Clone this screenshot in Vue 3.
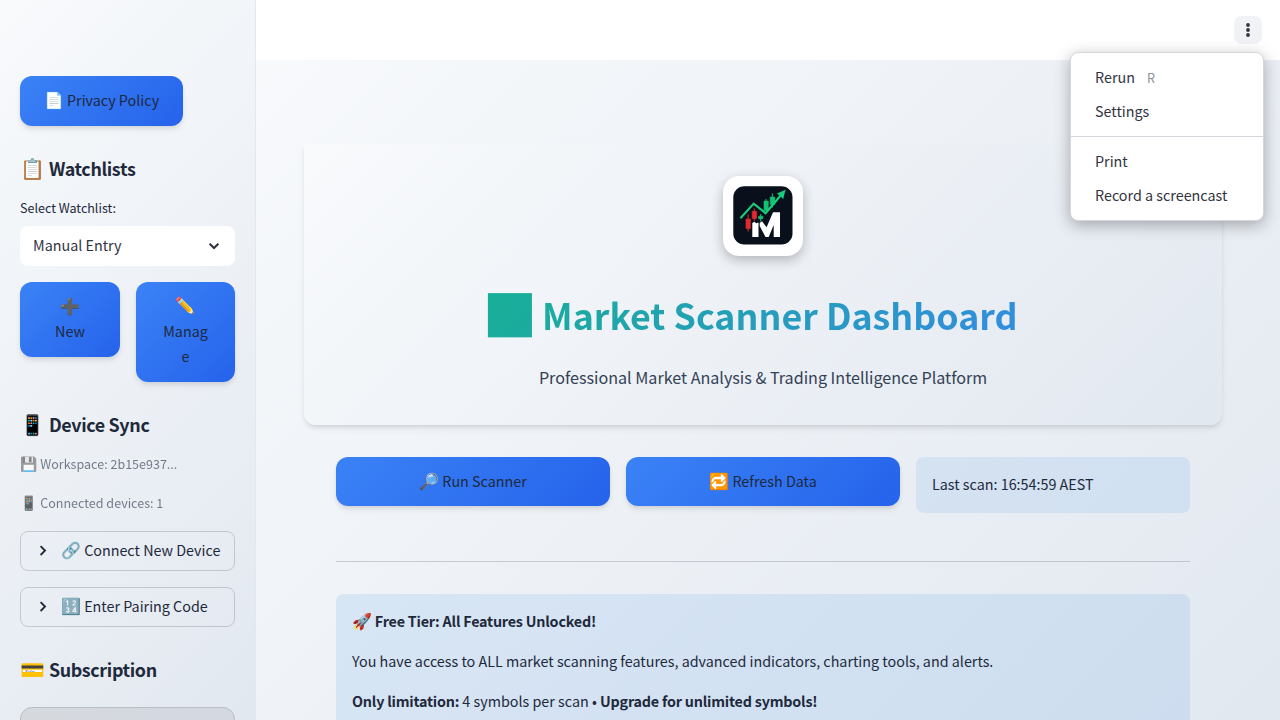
<script setup>
const menuGroups = [
  [{ label: 'Rerun', key: 'R' }, { label: 'Settings' }],
  [{ label: 'Print' }, { label: 'Record a screencast' }],
]
const expanders = [
  { icon: '🔗', label: 'Connect New Device' },
  { icon: '🔢', label: 'Enter Pairing Code' },
]
</script>

<template>
  <div class="app">
    <aside class="sidebar">
      <button class="btn policy"><span><i class="e">📄</i> Privacy Policy</span></button>
      <h3 class="watch"><i class="e">📋</i> Watchlists</h3>
      <label class="field">Select Watchlist:</label>
      <div class="select">
        <span>Manual Entry</span>
        <svg width="24" height="24" viewBox="0 0 24 24"><path d="M7.6 10.700l4.400 4.300 4.400-4.300" fill="none" stroke="#31333f" stroke-width="2.1" /></svg>
      </div>
      <div class="pair">
        <button class="btn tall"><i class="e">➕</i><br />New</button>
        <button class="btn tall"><i class="e">✏️</i><br />Manag<br />e</button>
      </div>
      <h3 class="sync"><i class="e">📱</i> Device Sync</h3>
      <p class="caption"><i class="e">💾</i> Workspace: 2b15e937...</p>
      <p class="caption second"><i class="e">📱</i> Connected devices: 1</p>
      <div v-for="x in expanders" :key="x.label" class="expander">
        <svg width="20" height="20" viewBox="0 0 20 20"><path d="M7.600 6.200l4.400 4.400-4.400 4.400" fill="none" stroke="#1e293b" stroke-width="1.9" /></svg>
        <span><i class="e">{{ x.icon }}</i> {{ x.label }}</span>
      </div>
      <h3 class="sub"><i class="e">💳</i> Subscription</h3>
      <div class="plan"></div>
    </aside>

    <div class="content">
      <header class="topbar">
        <button class="dots" aria-label="Menu">
          <svg width="20" height="20" viewBox="0 0 20 20" fill="#31333f"><circle cx="10" cy="5" r="1.9" /><circle cx="10" cy="10" r="1.9" /><circle cx="10" cy="15" r="1.9" /></svg>
        </button>
      </header>
      <main>
        <section class="hero">
          <div class="logo">
            <svg width="60" height="60" viewBox="0 0 60 60">
              <rect x=".3" y=".3" width="59.2" height="58.2" rx="11" fill="#09101c" />
              <g fill="#e32a2e" stroke="#e32a2e">
                <path d="M15.200 28.500v17M21.300 22.500v12.500" />
                <path d="M13 33h4.400v9.600H13zM19.200 25.300h4.400v7.200h-4.400z" stroke-width=".6" />
              </g>
              <g fill="#12c172" stroke="#12c172">
                <path d="M27.700 28v7.500M33 13v12M39.400 7.500v14" />
                <path d="M25.600 30.200h4.300v2.600h-4.300zM31 15h4.300v9.500H31zM37.200 11h4.600v7.600h-4.600z" stroke-width=".6" />
              </g>
              <path d="M7.400 32.300L20.700 17.600l11.900 9.600L48.500 8.500" fill="none" stroke="#17cf7c" stroke-width="2.100" />
              <path d="M52.600 3.800l-2.500 9.400-2.200-2.700-3.900-3z" fill="#17cf7c" />
              <path d="M19.300 51V37l2-1.200 2 1.400 2.200-.6V51zM26.700 37l2.300-1.800 4.600 6L40 26.300h7V51h-6.300V39l-5 12h-3.200l-5.800-11z" fill="#fff" />
            </svg>
          </div>
          <h1><i class="e">📈</i> Market Scanner Dashboard</h1>
          <p class="tagline">Professional Market Analysis &amp; Trading Intelligence Platform</p>
        </section>
        <div class="actions">
          <button class="btn"><span><i class="e">🔎</i> Run Scanner</span></button>
          <button class="btn"><span><i class="e">🔁</i> Refresh Data</span></button>
          <div class="info">Last scan: 16:54:59 AEST</div>
        </div>
        <hr />
        <section class="tier">
          <p><b><i class="e">🚀</i> Free Tier: All Features Unlocked!</b></p>
          <p>You have access to ALL market scanning features, advanced indicators, charting tools, and alerts.</p>
          <p><b>Only limitation:</b> 4 symbols per scan • <b>Upgrade for unlimited symbols!</b></p>
        </section>
      </main>
    </div>

    <nav class="menu">
      <ul v-for="(group, i) in menuGroups" :key="i">
        <li v-for="item in group" :key="item.label">{{ item.label }}<kbd v-if="item.key">{{ item.key }}</kbd></li>
      </ul>
    </nav>
  </div>
</template>

<style>
body { margin: 0; overflow: hidden; }
</style>

<style scoped>
* { box-sizing: border-box; }
.app {
  position: relative;
  display: flex;
  width: 1280px;
  height: 720px;
  overflow: hidden;
  font-family: "Noto Sans CJK JP", "Noto Sans", sans-serif;
  font-size: 14.33px;
  line-height: 24px;
  color: #1e293b;
}
.sidebar, .content, .hero { background: linear-gradient(135deg, #f8fafc 0%, #e2e8f0 100%); }
h1, h3, p, ul { margin: 0; padding: 0; }
.e { font-style: normal; font-size: 1.117em; line-height: 1; font-family: "Noto Color Emoji", sans-serif; }
.btn {
  display: flex;
  align-items: center;
  justify-content: center;
  padding: 0 0 2px;
  border: 0;
  border-radius: 12px;
  font: inherit;
  color: #1e293b;
  background: linear-gradient(135deg, #3b82f6 0%, #2563eb 100%);
  box-shadow: 0 4px 6px -1px rgba(0, 0, 0, .1), 0 2px 4px -1px rgba(0, 0, 0, .06);
}
.sidebar {
  width: 256px;
  height: 720px;
  flex: none;
  padding: 76px 20px 0;
  border-right: 1px solid #e2e8f0;
}
.policy { width: 163px; height: 50px; }
h3 { font-size: 17.9px; line-height: 24px; font-weight: 600; letter-spacing: -.36px; }
h3 .e { letter-spacing: 0; margin-right: .3px; }
.watch { margin-top: 30px; }
.field { display: block; margin-top: 18px; font-size: 12.54px; line-height: 20px; }
.select {
  display: flex;
  align-items: center;
  justify-content: space-between;
  height: 40px;
  margin-top: 8px;
  padding: 0 9px 2px 13px;
  border-radius: 8px;
  background: #fff;
  color: #31333f;
}
.pair { display: grid; grid-template-columns: 100px 99px; gap: 16px; align-items: start; margin-top: 16px; }
.tall { display: block; padding: 10px 0 13px; line-height: 25.4px; height: 75px; }
.tall:last-child { height: 100px; }
.sync { margin-top: 30px; }
.caption { margin-top: 18px; font-size: 12.54px; line-height: 20px; opacity: .6; }
.second { margin-top: 19px; margin-bottom: 18px; }
.expander {
  display: flex;
  align-items: center;
  height: 40px;
  margin-bottom: 16px;
  padding: 0 0 2px 12px;
  border: 1px solid rgba(49, 51, 63, .2);
  border-radius: 8px;
  white-space: nowrap;
}
.expander svg { margin-right: 8px; }
.sub { margin-top: 30px; }
.plan { height: 60px; margin-top: 26px; border: 1px solid #b9bdc5; border-radius: 12px; background: linear-gradient(135deg, #d6d9dd, #d2d7e2); }
.content { flex: 1; min-width: 0; }
.topbar { display: flex; justify-content: flex-end; height: 60px; padding: 16px 18px 0 0; background: #fff; }
.dots { display: grid; place-items: center; width: 28px; height: 28px; padding: 0; border: 0; border-radius: 8px; background: #f0f2f6; }
main { width: 854px; margin-left: 80px; padding-top: 84px; }
.hero {
  height: 281px;
  margin: 0 -32px;
  padding-top: 32px;
  text-align: center;
  border-radius: 0 0 12px 12px;
  box-shadow: 0 4px 6px -1px rgba(0, 0, 0, .1), 0 2px 4px -1px rgba(0, 0, 0, .06);
}
.logo { display: grid; place-items: center; width: 80px; height: 80px; margin: 0 auto; border-radius: 16px; background: #fff; box-shadow: 0 4px 12px rgba(0, 0, 0, .25); }
h1 {
  height: 64px;
  margin: 26px 32px 0;
  padding-right: 23px;
  font-size: 35.8px;
  line-height: 64px;
  font-weight: 700;
  color: transparent;
  background: linear-gradient(135deg, #10b981 0%, #3b82f6 100%);
  -webkit-background-clip: text;
  background-clip: text;
}
h1 .e { margin-right: -1.2px; vertical-align: 1px; }
.tagline { margin-top: 17px; font-size: 16.12px; line-height: 28px; color: #334155; }
.actions { display: grid; grid-template-columns: repeat(3, 274px); gap: 16px; align-items: start; }
.hero + .actions { margin-top: 32px; }
.actions .btn { height: 49px; }
.info { height: 56px; padding: 15px 16px; border-radius: 8px; background: rgba(28, 131, 225, .1); }
hr { height: 1px; margin: 48px 0 32px; border: 0; background: rgba(49, 51, 63, .2); }
.tier { height: 126px; padding: 15px 16px 0; border-radius: 8px 8px 0 0; background: rgba(28, 131, 225, .11); }
.tier p { margin-bottom: 16px; }
.tier b { letter-spacing: -.2px; }
.menu {
  position: absolute;
  top: 52px;
  left: 1070px;
  width: 194px;
  border: 1px solid #d5d7dc;
  border-radius: 8px;
  background: #fff;
  color: #31333f;
  box-shadow: 0 4px 16px rgba(0, 0, 0, .3);
}
.menu ul { padding: 7px 0 8px; list-style: none; }
.menu ul + ul { border-top: 1px solid #d5d7dc; }
.menu li { height: 34px; padding-left: 24px; line-height: 34px; }
kbd { margin-left: 12px; font-family: inherit; font-size: 12.54px; color: #8f9199; }
</style>
